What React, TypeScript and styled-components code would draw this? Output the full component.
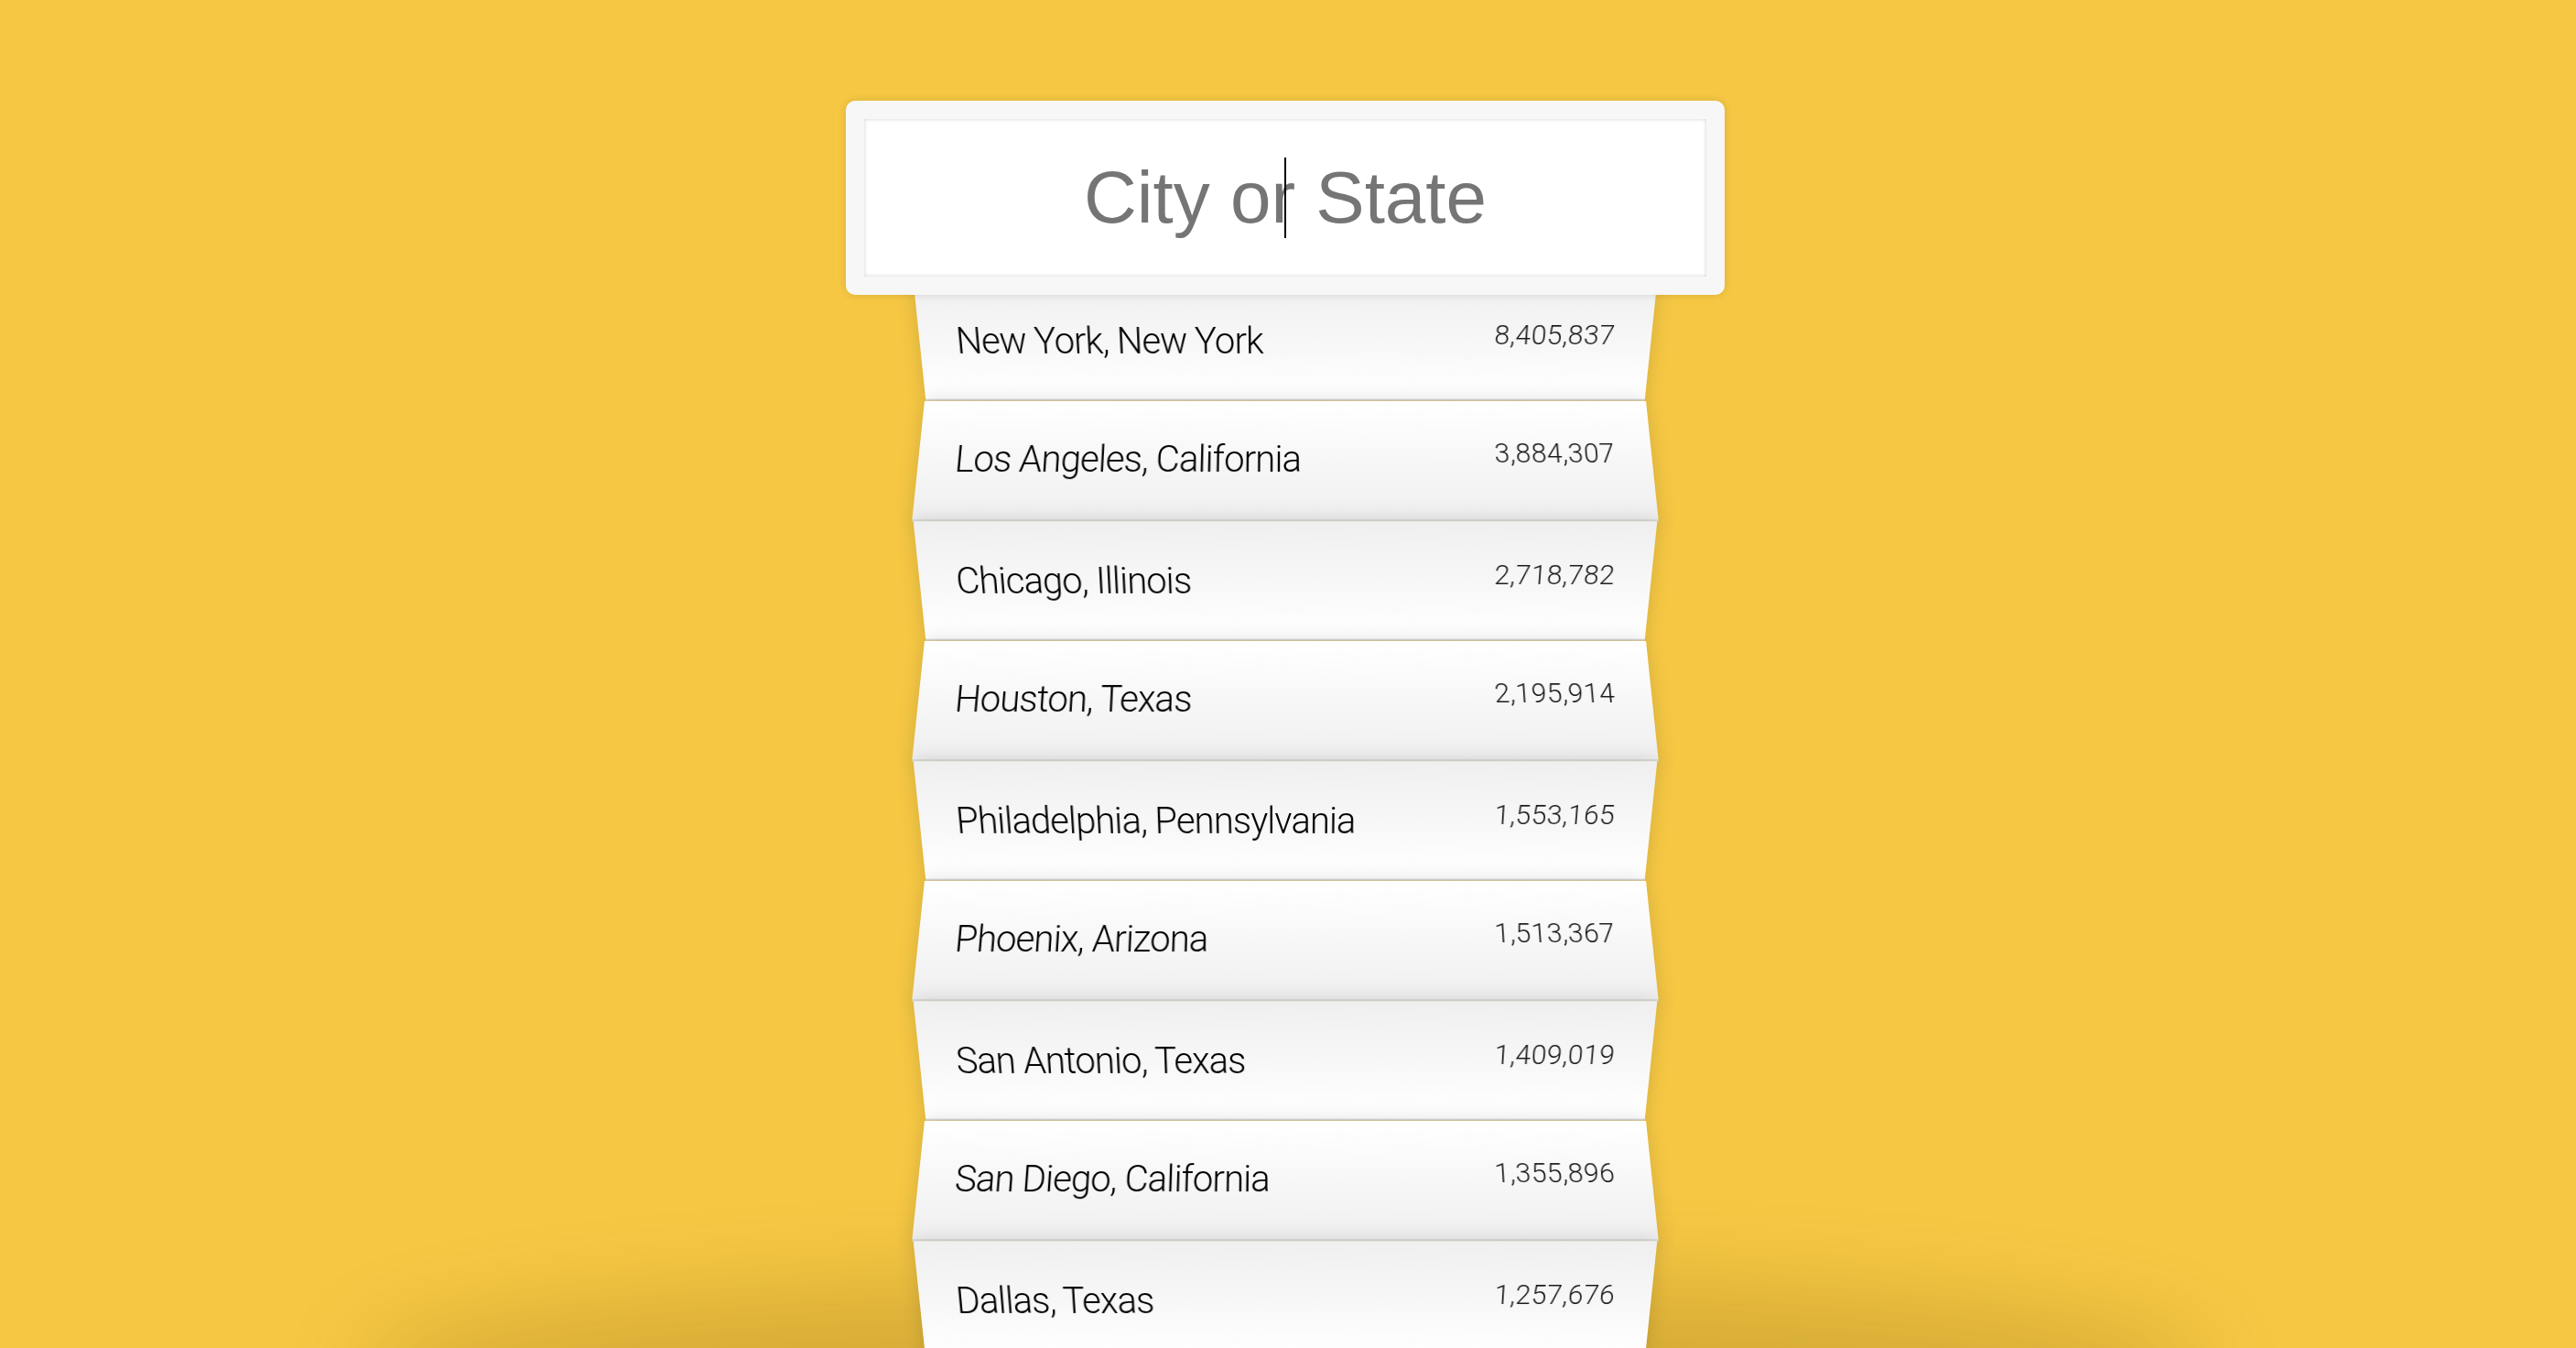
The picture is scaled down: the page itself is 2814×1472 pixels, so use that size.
import React from "react";
import styled, { createGlobalStyle } from "styled-components";

const GlobalStyle = createGlobalStyle`
  *, *::before, *::after { box-sizing: border-box; }
  html, body {
    margin: 0;
    padding: 0;
    background: #f5c743;
  }
  body {
    font-family: "Helvetica Neue", Roboto, "Liberation Sans", sans-serif;
    font-size: 40px;
    font-weight: 300;
  }
`;

const Page = styled.main`
  position: relative;
  height: 100vh;
  overflow: hidden;
  padding: 110px 6px 0 0;
  background: #f5c743;
`;

const FloorShadow = styled.div`
  position: absolute;
  left: 50%;
  bottom: -120px;
  width: 2020px;
  height: 200px;
  margin-left: -1013px;
  border-radius: 50%;
  background: rgba(90, 60, 0, 0.18);
  filter: blur(45px);
`;

const SearchForm = styled.form`
  position: relative;
  display: flex;
  flex-direction: column;
  align-items: center;
  width: 800px;
  margin: 0 auto;
`;

const SearchInput = styled.input`
  display: block;
  flex: none;
  z-index: 2;
  width: 960px;
  height: 212px;
  margin: 0 0 -20px;
  padding: 40px;
  border: 20px solid #f7f7f7;
  border-radius: 10px;
  outline: 0;
  background: #fff;
  text-align: center;
  font-family: "Liberation Sans", Arial, sans-serif;
  font-size: 80px;
  font-weight: 400;
  color: #000;
  caret-color: transparent;
  box-shadow: 0 0 10px rgba(0, 0, 0, 0.12), inset 0 0 4px rgba(0, 0, 0, 0.19);

  &::placeholder {
    color: #757575;
    opacity: 1;
  }
`;

const Caret = styled.span`
  position: absolute;
  z-index: 3;
  left: 50%;
  top: 62px;
  width: 2px;
  height: 88px;
  margin-left: -1px;
  background: #000;
`;

const Suggestions = styled.ul`
  align-self: stretch;
  display: flex;
  flex-direction: column;
  margin: 0;
  padding: 0;
  list-style: none;
`;

const Suggestion = styled.li<{ $even: boolean }>`
  display: flex;
  justify-content: space-between;
  margin: 0;
  padding: 40px;
  line-height: 49px;
  color: #000;
  border-bottom: 2px solid #d8d8d8;
  box-shadow: 0 0 20px rgba(0, 0, 0, 0.14);
  text-transform: capitalize;
  transform: ${(p) =>
    p.$even
      ? "perspective(200px) rotateX(3deg) translateY(4px) scale(1.001)"
      : "perspective(200px) rotateX(-3deg) translateY(6px)"};
  background: ${(p) =>
    p.$even
      ? "linear-gradient(to bottom, #ffffff 0%, #efefef 100%)"
      : "linear-gradient(to top, #ffffff 0%, #efefef 100%)"};
`;

const Name = styled.span`
  white-space: nowrap;
  letter-spacing: -0.9px;
`;

const Population = styled.span`
  font-size: 30px;
  line-height: 36px;
  letter-spacing: 0.4px;
  color: #1a1a1a;
`;

const cities: [string, string][] = [
  ["New York, New York", "8,405,837"],
  ["Los Angeles, California", "3,884,307"],
  ["Chicago, Illinois", "2,718,782"],
  ["Houston, Texas", "2,195,914"],
  ["Philadelphia, Pennsylvania", "1,553,165"],
  ["Phoenix, Arizona", "1,513,367"],
  ["San Antonio, Texas", "1,409,019"],
  ["San Diego, California", "1,355,896"],
  ["Dallas, Texas", "1,257,676"],
];

export default function App() {
  return (
    <>
      <GlobalStyle />
      <Page>
        <FloorShadow />
        <SearchForm onSubmit={(e) => e.preventDefault()}>
          <SearchInput type="text" placeholder="City or State" aria-label="City or State" />
          <Caret />
          <Suggestions>
            {cities.map(([name, pop], i) => (
              <Suggestion key={name} $even={i % 2 === 1}>
                <Name>{name}</Name>
                <Population>{pop}</Population>
              </Suggestion>
            ))}
          </Suggestions>
        </SearchForm>
      </Page>
    </>
  );
}
